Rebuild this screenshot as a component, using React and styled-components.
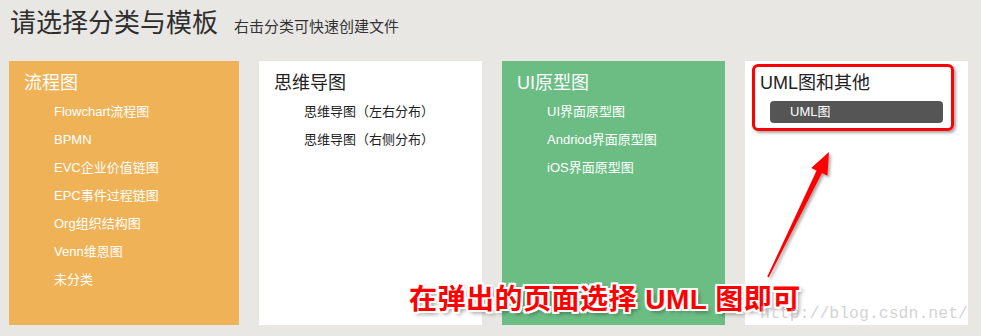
import React from 'react'
import styled, {createGlobalStyle} from 'styled-components'

const GlobalStyle = createGlobalStyle`
  html, body {
    margin: 0;
    padding: 0;
    background: #e8e7e4;
  }
  body {
    font-family: "Liberation Sans", Arial, "Noto Sans CJK SC", sans-serif;
    color: #333;
  }
`

const categories = [
  {
    title: '流程图',
    tone: 'orange',
    items: ['Flowchart流程图', 'BPMN', 'EVC企业价值链图', 'EPC事件过程链图', 'Org组织结构图', 'Venn维恩图', '未分类'],
  },
  {
    title: '思维导图',
    tone: 'white',
    items: ['思维导图（左右分布）', '思维导图（右侧分布）'],
  },
  {
    title: 'UI原型图',
    tone: 'green',
    items: ['UI界面原型图', 'Andriod界面原型图', 'iOS界面原型图'],
  },
  {
    title: 'UML图和其他',
    tone: 'white',
    items: ['UML图'],
    active: 'UML图',
    marked: true,
  },
]

const tones = {
  orange: {bg: '#efb257', title: '#fff', item: '#fff'},
  green: {bg: '#6bbd84', title: '#fff', item: '#fff'},
  white: {bg: '#fff', title: '#222', item: '#222'},
}

export default function App(){
  return(
    <Page>
      <GlobalStyle/>
      <Header>
        <Title>请选择分类与模板</Title>
        <Hint>右击分类可快速创建文件</Hint>
      </Header>

      <Grid>
        {categories.map(cat => (
          <Panel key={cat.title} $tone={cat.tone}>
            <PanelTitle $tone={cat.tone}>{cat.title}</PanelTitle>
            <ItemList>
              {cat.items.map(item => (
                <Item key={item} $tone={cat.tone} $active={cat.active === item}>{item}</Item>
              ))}
            </ItemList>
            {cat.marked && <Marker/>}
          </Panel>
        ))}
      </Grid>

      {/* annotations drawn over the screenshot */}
      <Arrow width='100' height='150' viewBox='0 0 100 150'>
        <defs>
          <filter id='arrowShadow' x='-30%' y='-30%' width='160%' height='160%'>
            <feDropShadow dx='2' dy='2' stdDeviation='1.5' floodColor='#000' floodOpacity='0.35'/>
          </filter>
        </defs>
        <polygon
          points='79,12 77.4,35.8 72,33.1 18.7,137.4 17.3,136.6 66.6,30.5 61.2,27.9'
          fill='#ff0000'
          filter='url(#arrowShadow)'
        />
      </Arrow>

      <Callout>在弹出的页面选择 UML 图即可</Callout>
      <Watermark>http://blog.csdn.net/</Watermark>
    </Page>
  )
}

const Page = styled.div`
  position: relative;
  width: 981px;
  height: 336px;
  overflow: hidden;
  background: #e8e7e4;
`

const Header = styled.header`
  display: flex;
  align-items: baseline;
  gap: 16px;
  padding: 8px 10px 0;
  height: 30px;
`

const Title = styled.h1`
  margin: 0;
  font-size: 26px;
  line-height: 30px;
  font-weight: normal;
  color: #2e2e2e;
`

const Hint = styled.span`
  font-size: 15px;
  line-height: 30px;
  color: #333;
`

const Grid = styled.div`
  display: grid;
  grid-template-columns: 230px 223px 223px 223px;
  gap: 20px;
  margin-top: 23px;
  padding-left: 9px;
`

const Panel = styled.section`
  position: relative;
  height: 264px;
  box-sizing: border-box;
  padding-top: 8px;
  background: ${p => tones[p.$tone].bg};
`

const PanelTitle = styled.h2`
  margin: 0 0 4px;
  padding-left: 15px;
  font-size: 18px;
  line-height: 28px;
  font-weight: normal;
  color: ${p => tones[p.$tone].title};
`

const ItemList = styled.ul`
  list-style: none;
  margin: 0;
  padding: 0;
`

const Item = styled.li`
  margin: 0 25px 6px;
  padding-left: 20px;
  height: 22px;
  line-height: 22px;
  font-size: 13px;
  border-radius: 4px;
  color: ${p => p.$active ? '#fff' : tones[p.$tone].item};
  background: ${p => p.$active ? '#555' : 'transparent'};
`

const Marker = styled.div`
  position: absolute;
  left: 7px;
  top: 3px;
  width: 202px;
  height: 67px;
  box-sizing: border-box;
  border: 3px solid #ff0000;
  border-radius: 6px;
  box-shadow: 2px 2px 3px rgba(0,0,0,0.35);
  pointer-events: none;
`

const Arrow = styled.svg`
  position: absolute;
  left: 750px;
  top: 140px;
  overflow: visible;
`

const Callout = styled.div`
  position: absolute;
  left: 409px;
  top: 282px;
  font-size: 28px;
  line-height: 36px;
  font-weight: bold;
  color: #ff0000;
  white-space: nowrap;
  letter-spacing: 0.5px;
  text-shadow:
    -2px -2px 0 #fff, 2px -2px 0 #fff, -2px 2px 0 #fff, 2px 2px 0 #fff,
    0 -2px 0 #fff, 0 2px 0 #fff, -2px 0 0 #fff, 2px 0 0 #fff,
    3px 3px 4px rgba(0,0,0,0.45);
`

const Watermark = styled.div`
  position: absolute;
  left: 760px;
  top: 304px;
  font-family: "Liberation Mono", "Courier New", monospace;
  font-size: 16.5px;
  line-height: 20px;
  color: rgba(180,180,180,0.6);
  white-space: nowrap;
  pointer-events: none;
`
